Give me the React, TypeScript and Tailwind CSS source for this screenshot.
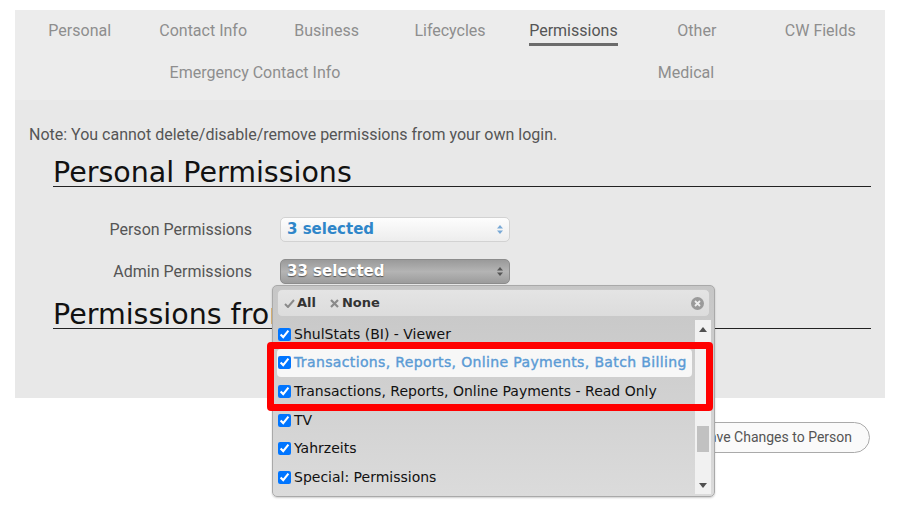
import React from "react";

const tabsTop = ["Personal", "Contact Info", "Business", "Lifecycles", "Permissions", "Other", "CW Fields"];

const adminItems = [
  { label: "ShulStats (BI) - Viewer" },
  { label: "Transactions, Reports, Online Payments, Batch Billing", focused: true },
  { label: "Transactions, Reports, Online Payments - Read Only" },
  { label: "TV" },
  { label: "Yahrzeits" },
  { label: "Special: Permissions" },
];

const SelectArrows: React.FC<{ color: string }> = ({ color }) => (
  <svg width="6" height="9" viewBox="0 0 6 9">
    <path d="M3 0 L6 3.5 H0 Z" fill={color} />
    <path d="M3 9 L6 5.5 H0 Z" fill={color} />
  </svg>
);

const Tab: React.FC<{ label: string; active?: boolean }> = ({ label, active }) => (
  <div className="flex items-center justify-center">
    <span
      className={`pt-[3px] pb-[3px] border-b-[3px] leading-[19px] ${
        active ? "border-[#6b6b6b] text-[#555]" : "border-transparent text-[#8e8e8e]"
      }`}
    >
      {label}
    </span>
  </div>
);

const App: React.FC = () => {
  return (
    <div className="relative min-h-screen bg-white pt-[10px] pl-[15px] font-['Roboto',sans-serif] text-[16px]">
      <div className="w-[870px] bg-[#e8e8e8]">
        {/* tab strip */}
        <nav className="bg-[#ececec] h-[90px] pt-[2px]">
          <div className="grid grid-cols-7 h-[40px] px-[3px]">
            {tabsTop.map((t) => (
              <Tab key={t} label={t} active={t === "Permissions"} />
            ))}
          </div>
          <div className="grid grid-cols-[480px_382px] h-[40px] mt-[2px]">
            <Tab label="Emergency Contact Info" />
            <Tab label="Medical" />
          </div>
        </nav>

        <section className="px-[14px] pt-[23px] pb-[69px]">
          <p className="leading-[24px] text-[#555]">
            Note: You cannot delete/disable/remove permissions from your own login.
          </p>

          <h2 className="ml-[24px] mt-[13px] border-b border-[#222] font-['DejaVu_Sans',sans-serif] text-[28.5px] leading-[26px] text-[#111]">
            Personal Permissions
          </h2>

          <div className="mt-[30px] flex flex-col gap-[17px]">
            <div className="flex items-center h-[25px]">
              <label className="w-[223px] text-right text-[#555]">Person Permissions</label>
              <div className="ml-[28px] w-[230px] h-[25px] flex items-center justify-between pl-[6px] pr-[6px] rounded-[5px] border border-[#d2d2d2] bg-gradient-to-b from-[#fdfdfd] to-[#ededed] font-['DejaVu_Sans',sans-serif] font-bold text-[15px] text-[#2f86c9]">
                <span>3 selected</span>
                <SelectArrows color="#79a9d6" />
              </div>
            </div>
            <div className="flex items-center h-[25px]">
              <label className="w-[223px] text-right text-[#555]">Admin Permissions</label>
              <div className="ml-[28px] w-[230px] h-[25px] flex items-center justify-between pl-[6px] pr-[6px] rounded-[5px] border border-[#8c8c8c] bg-gradient-to-b from-[#9a9a9a] via-[#b4b4b4] to-[#9c9c9c] font-['DejaVu_Sans',sans-serif] font-bold text-[15px] text-white [text-shadow:0_1px_1px_#555]">
                <span>33 selected</span>
                <SelectArrows color="#555" />
              </div>
            </div>
          </div>

          <h2 className="ml-[24px] mt-[18px] border-b border-[#222] font-['DejaVu_Sans',sans-serif] text-[28.5px] leading-[26px] text-[#111]">
            Permissions from Groups
          </h2>
        </section>
      </div>

      <div className="w-[870px] flex justify-end pr-[15px] mt-[24px]">
        <button className="h-[31px] px-[17px] rounded-full border border-[#aaa] bg-[#fafafa] text-[14px] text-[#555]">
          Save Changes to Person
        </button>
      </div>

      {/* open multiselect menu */}
      <div className="absolute left-[272px] top-[285px] w-[443px] h-[212px] flex flex-col rounded-[5px] border border-[#a9a9a9] bg-gradient-to-b from-[#c6c6c6] to-[#dbdbdb] font-['DejaVu_Sans',sans-serif] shadow-[0_1px_2px_rgba(0,0,0,0.2)]">
        <div className="mx-[4px] mt-[3px] h-[28px] flex items-center pl-[6px] pr-[5px] rounded-[5px] border border-[#c9c9c9] bg-gradient-to-b from-[#e4e4e4] to-[#dcdcdc] text-[13px] font-bold text-[#333]">
          <svg width="11" height="9" viewBox="0 0 11 9" className="mr-[2px]">
            <path d="M1 5 L4 8 L10 1" stroke="#8a8a8a" strokeWidth="2" fill="none" />
          </svg>
          <span>All</span>
          <svg width="9" height="9" viewBox="0 0 9 9" className="ml-[14px] mr-[3px]">
            <path d="M1 1 L8 8 M8 1 L1 8" stroke="#8a8a8a" strokeWidth="2.2" />
          </svg>
          <span>None</span>
          <svg width="13" height="13" viewBox="0 0 13 13" className="ml-auto">
            <circle cx="6.5" cy="6.5" r="6.5" fill="#9a9a9a" />
            <path d="M4 4 L9 9 M9 4 L4 9" stroke="#eee" strokeWidth="1.8" />
          </svg>
        </div>
        <div className="flex flex-1 mt-[3px] mb-[2px]">
          <ul className="flex-1 pl-[4px] pr-[3px] overflow-hidden">
            {adminItems.map((item) => (
              <li
                key={item.label}
                className={`h-[28.6px] flex items-center pl-[1px] whitespace-nowrap text-[14px] rounded-[4px] ${
                  item.focused
                    ? "bg-[#f7f7f7] text-[#5b9bd5] tracking-[0.36px] [-webkit-text-stroke:0.4px_#5b9bd5]"
                    : "text-[#111]"
                }`}
              >
                <input
                  type="checkbox"
                  defaultChecked
                  className="m-0 mr-[3px] w-[13px] h-[13px] shrink-0 accent-[#0075ff]"
                />
                <span>{item.label}</span>
              </li>
            ))}
          </ul>
          <div className="w-[16px] mr-[3px] flex flex-col items-center bg-[#f1f1f1]">
            <svg width="8" height="5" viewBox="0 0 8 5" className="mt-[7px]">
              <path d="M4 0 L8 5 H0 Z" fill="#505050" />
            </svg>
            <div className="mt-[94px] w-[12px] h-[26px] bg-[#c1c1c1]" />
            <svg width="8" height="5" viewBox="0 0 8 5" className="mt-auto mb-[6px]">
              <path d="M0 0 H8 L4 5 Z" fill="#505050" />
            </svg>
          </div>
        </div>
      </div>

      {/* highlight frame */}
      <div className="absolute left-[267px] top-[342px] w-[446px] h-[69px] border-[7px] border-[#ff0000] rounded-[4px] pointer-events-none" />
    </div>
  );
};

export default App;
